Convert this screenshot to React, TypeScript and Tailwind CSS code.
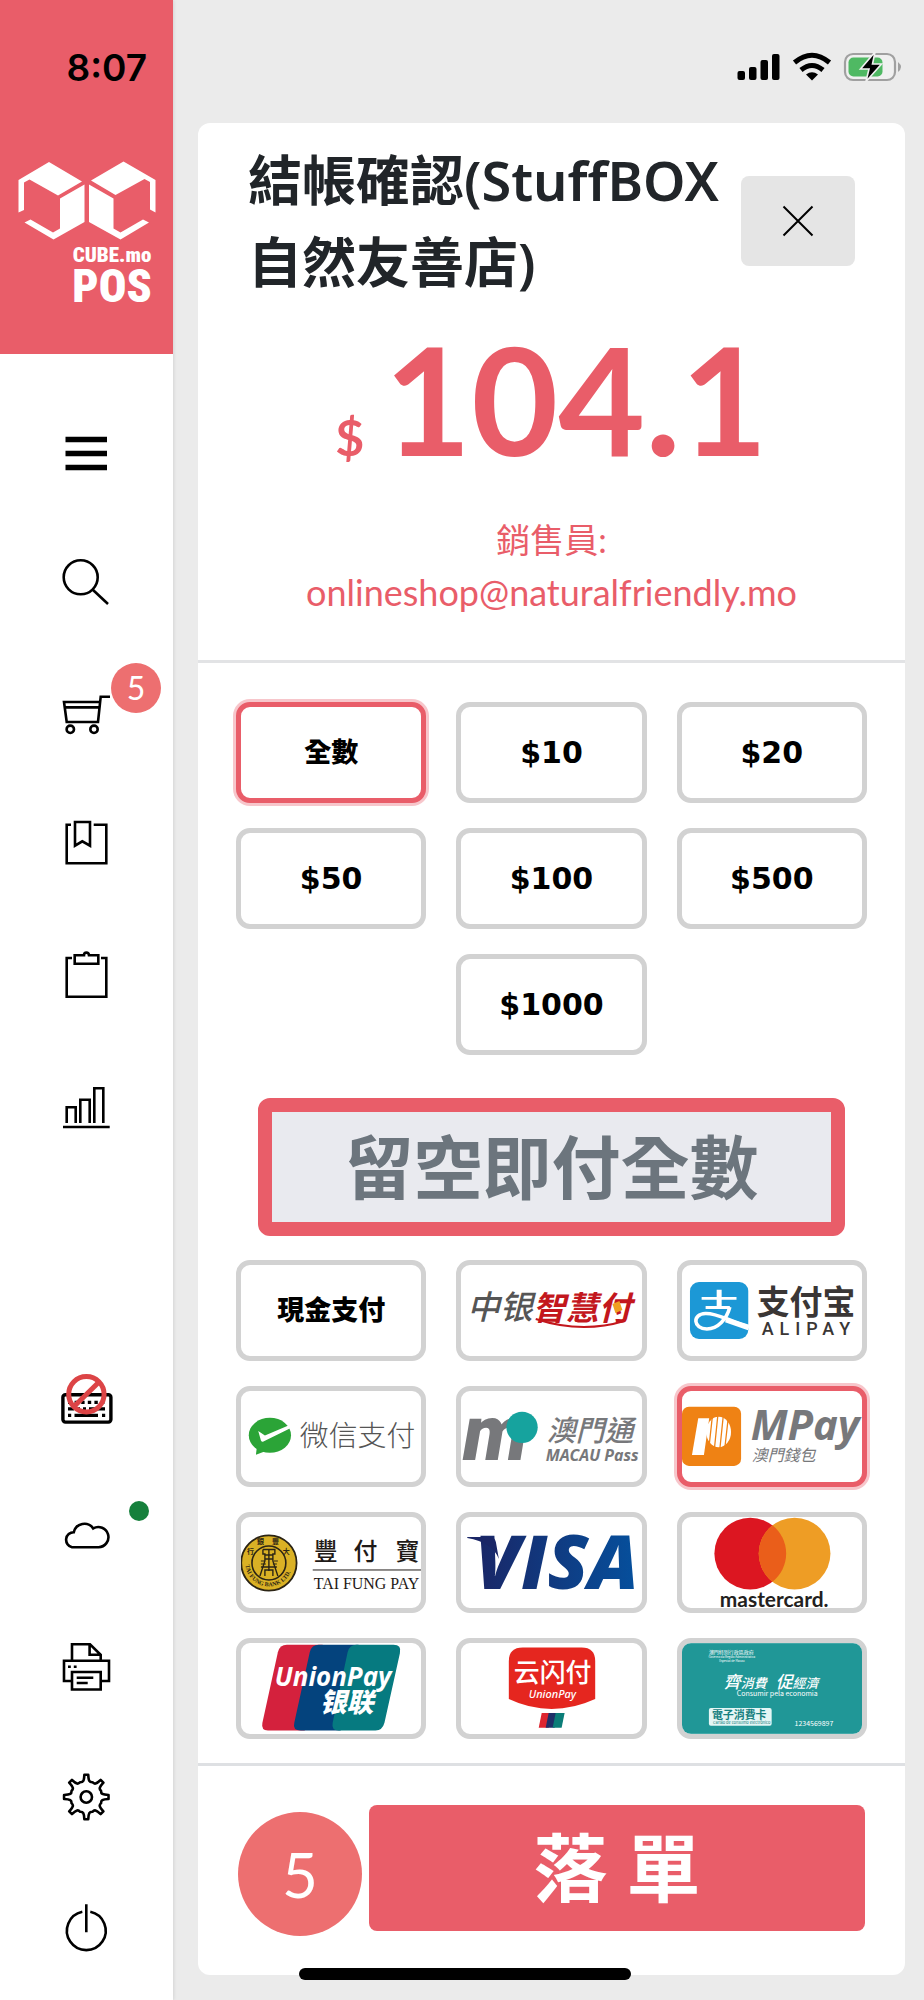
import { useState } from "react"
import type { ReactNode } from "react"
import clsx from "clsx"

interface NavItem {
  id: string
  label: string
  icon: ReactNode
  badge?: ReactNode
}

interface PaymentMethod {
  id: string
  label: string
  logo?: ReactNode
}

function NavIcon({ children }: { children: ReactNode }) {
  return (
    <svg
      viewBox="0 0 48 48"
      className="h-12 w-12 overflow-visible"
      fill="none"
      stroke="#000"
      strokeWidth="2.6"
      aria-hidden="true"
    >
      {children}
    </svg>
  )
}

function buildGearPath(cx: number, cy: number) {
  const point = (deg: number, r: number) => {
    const a = (deg * Math.PI) / 180
    return `${(cx + r * Math.cos(a)).toFixed(2)} ${(cy + r * Math.sin(a)).toFixed(2)}`
  }
  let d = `M${point(-5, 22.3)}`
  for (let i = 0; i < 8; i++) {
    const a = i * 45
    d += `L${point(a + 5, 22.3)}C${point(a + 8, 16)} ${point(a + 12, 15)} ${point(a + 22.5, 16)}`
    d += `C${point(a + 33, 15)} ${point(a + 37, 16)} ${point(a + 40, 22.3)}`
  }
  return `${d}Z`
}

const GEAR_PATH = buildGearPath(24.3, 23)

const TOP_NAV: NavItem[] = [
  {
    id: "menu",
    label: "Menu",
    icon: (
      <NavIcon>
        <path d="M3.5 9.5H45M3.5 23.5H45M3.5 37.5H45" strokeWidth="5.4" />
      </NavIcon>
    ),
  },
  {
    id: "search",
    label: "Search",
    icon: (
      <NavIcon>
        <circle cx="18.7" cy="17.3" r="17" />
        <path d="M30.5 29.5 46 44" />
      </NavIcon>
    ),
  },
  {
    id: "cart",
    label: "Cart",
    badge: (
      <span className="absolute top-[14px] right-3 flex h-[50px] w-[50px] items-center justify-center rounded-full bg-[#ed6f70] text-[32px] font-normal text-white">
        5
      </span>
    ),
    icon: (
      <NavIcon>
        <path d="M48 6.7H38.7L36 32H4.7L2 12H38M3 17.4H37.5" />
        <circle cx="8.3" cy="39.3" r="3.7" />
        <circle cx="32" cy="39.3" r="3.7" />
      </NavIcon>
    ),
  },
  {
    id: "bookmark",
    label: "Bookmarks",
    icon: (
      <NavIcon>
        <path d="M9 4.7H4.7V43.3H44.3V4.7H31.7" />
        <path d="M13 2H28V25.7L20.3 21.3 13 25.7Z" />
      </NavIcon>
    ),
  },
  {
    id: "clipboard",
    label: "Orders",
    icon: (
      <NavIcon>
        <path d="M10 8H4.7V46.7H44.3V8H39" />
        <path d="M12.7 5.3H22Q22 2.6 24.4 2.6T27 5.3H36.3V13.7H12.7Z" />
      </NavIcon>
    ),
  },
  {
    id: "chart",
    label: "Reports",
    icon: (
      <NavIcon>
        <path d="M1 47H47.7M4.7 43V27.3H13.7V43M18.3 43V19.7H27.7V43M32.3 43V8.2H41.3V43" />
      </NavIcon>
    ),
  },
]

const BOTTOM_NAV: NavItem[] = [
  {
    id: "keyboard",
    label: "Keyboard off",
    icon: (
      <NavIcon>
        <rect x="0.9" y="10.7" width="48" height="27.4" rx="2.5" strokeWidth="3.4" />
        <path d="M6 18.4H44" strokeWidth="3.4" strokeDasharray="3.4 3.2" />
        <path d="M6 24.8H43" strokeWidth="3.2" strokeDasharray="6 3 3 3 3 3 16" />
        <path d="M6 31.4H9.2M12.5 31.4H36M40 31.4H43.2" strokeWidth="3.2" />
        <circle cx="24.4" cy="10.3" r="17.7" stroke="#dc4446" strokeWidth="5" />
        <path d="M12 22.5 37-2" stroke="#dc4446" strokeWidth="5" />
      </NavIcon>
    ),
  },
  {
    id: "cloud",
    label: "Cloud sync",
    badge: <span className="absolute top-7 right-6 h-5 w-5 rounded-full bg-[#16803c]" />,
    icon: (
      <NavIcon>
        <path d="M10 33.2A7.6 7.6 0 0 1 11.8 18.2A10.8 10.8 0 0 1 31.2 14.4A10.1 10.1 0 1 1 36.5 33.2Z" />
      </NavIcon>
    ),
  },
  {
    id: "printer",
    label: "Printer",
    icon: (
      <NavIcon>
        <path d="M10 37H2V16.7H47V37H38.7" />
        <path d="M10 28H38.7V45.5H10ZM10 16.7V0.3H28L38.7 10.8V16.7M27.6 0.3V10.8H38.7" />
        <path d="M14.7 33.7H31.3M14.7 39H25.7M6 22.7H8.8M11.8 22.7H14.6" />
      </NavIcon>
    ),
  },
  {
    id: "settings",
    label: "Settings",
    icon: (
      <NavIcon>
        <path d={GEAR_PATH} strokeLinejoin="round" />
        <circle cx="24.3" cy="23" r="5.7" />
      </NavIcon>
    ),
  },
  {
    id: "power",
    label: "Power",
    icon: (
      <NavIcon>
        <path d="M20.3 7.7A19.4 19.4 0 1 0 28.3 7.7M24.3 0.3V28.3" />
      </NavIcon>
    ),
  },
]

const SANS = "Lato, 'Noto Sans CJK TC', sans-serif"
const HAN = "'Noto Sans CJK TC', sans-serif"
const HAN_SC = "'Noto Sans CJK SC', sans-serif"

function Logo({ children }: { children: ReactNode }) {
  return (
    <svg viewBox="0 0 181 91" className="block h-full w-full font-normal" aria-hidden="true">
      {children}
    </svg>
  )
}

const BocLogo = (
  <Logo>
    <g fontFamily={HAN_SC} fontStyle="italic" fontWeight="500">
      <text x="6" y="54" fontSize="33" fill="#555">中银</text>
      <text x="72" y="55" fontSize="33" fontWeight="700" fill="#c3171d">智慧付</text>
    </g>
    <path d="M75 54Q121 69 164 56L170 35" fill="none" stroke="#c3171d" strokeWidth="2" />
    <path d="M152 39 159 36 162 45 155 48Z" fill="#f0a020" />
  </Logo>
)

const AlipayLogo = (
  <Logo>
    <rect x="8" y="17" width="58.5" height="57" rx="9" fill="#1c98d6" />
    <g fill="none" stroke="#fff">
      <path d="M19.7 33.3H54.7M23.7 42.5H48" strokeWidth="2.8" />
      <path d="M37.3 24.7V42" strokeWidth="5" />
      <path d="M48 42C45 54 36 64 25 64C11 64 10 49 23.5 48.5C36 48 46 56 67 61.5" strokeWidth="3.6" />
      <path d="M44 55 67 63" strokeWidth="5" />
    </g>
    <text x="75" y="49" fontSize="33" fontWeight="700" fill="#3a3635" fontFamily={HAN_SC}>支付宝</text>
    <text x="80" y="70" fontSize="18" fontWeight="500" fill="#3a3635" fontFamily="Roboto, sans-serif" className="tracking-[6px]">ALIPAY</text>
  </Logo>
)

const WechatLogo = (
  <Logo>
    <ellipse cx="29" cy="44.3" rx="21.2" ry="17.6" fill="#2ba437" />
    <path d="M16 55 15 63.7 25 60Z" fill="#2ba437" />
    <path d="M17.3 40 24 44.4 47.6 34.5 50 37 22.5 50.5Q21 51.3 20 49.5Z" fill="#fff" />
    <text x="59" y="55" fontSize="29" fontWeight="300" fill="#555" fontFamily={HAN_SC}>微信支付</text>
  </Logo>
)

const MacauPassLogo = (
  <Logo>
    <text x="2" y="69" fontSize="78" fontWeight="900" fontStyle="italic" fill="#77787b" fontFamily="Roboto, sans-serif">m</text>
    <circle cx="61.3" cy="36.3" r="15.7" fill="#16a39e" />
    <text x="86" y="50" fontSize="29" fontWeight="500" fontStyle="italic" fill="#77787b" fontFamily={HAN}>澳門通</text>
    <text x="85" y="70" fontSize="16" fontWeight="700" fontStyle="italic" fill="#77787b" fontFamily="'Noto Sans', sans-serif">MACAU Pass</text>
  </Logo>
)

const MPayLogo = (
  <Logo>
    <rect x="0" y="15.7" width="59.3" height="59.3" rx="7" fill="#ef8214" />
    <path d="M16.3 27.3H27.3L22 64H10Z" fill="#fff" />
    <ellipse cx="36.8" cy="41" rx="12.4" ry="15.3" fill="#fff" />
    <path d="M30.5 25 27 57M36 24 32.5 58M41.5 24 38 58M46.5 26 43 57" stroke="#ef8214" strokeWidth="1.3" />
    <text x="69" y="49" fontSize="42" fontWeight="700" fontStyle="italic" fill="#77787b" fontFamily="'Noto Sans', sans-serif">MPay</text>
    <text x="70" y="70" fontSize="16" fontStyle="italic" fill="#77787b" fontFamily={HAN}>澳門錢包</text>
  </Logo>
)

const TaiFungLogo = (
  <Logo>
    <defs>
      <path id="seal-bottom" d="M4.5 46A23.5 23.5 0 0 0 51.5 46" />
    </defs>
    <circle cx="28" cy="46" r="27.8" fill="#dab125" stroke="#2b2415" strokeWidth="1.8" />
    <circle cx="28" cy="46" r="17" fill="none" stroke="#2b2415" strokeWidth="1.6" />
    <path d="M22 32.5H34V37H32V44L37 59M22 32.5V37H24V44L19 59M28 33V54M24 38H32M24 42H32M20 50H36M24 59V53H32V59" fill="none" stroke="#2b2415" strokeWidth="1.4" />
    <path d="M20 44H24M20 47H25M33 44H37M32 47H36" stroke="#2b2415" strokeWidth="1.2" />
    <text fontSize="6" fontWeight="700" fill="#2b2415" fontFamily="'Liberation Serif', serif">
      <textPath href="#seal-bottom" startOffset="2">TAI FUNG BANK LTD.</textPath>
    </text>
    <g fontSize="7" fontWeight="700" fill="#2b2415" fontFamily={HAN}>
      <text x="6" y="37">行</text>
      <text x="16" y="27">銀</text>
      <text x="31" y="27">豐</text>
      <text x="42" y="37">大</text>
    </g>
    <g fontSize="24" fontWeight="500" fill="#1f1a17" fontFamily={HAN}>
      <text x="73" y="43">豐</text>
      <text x="113" y="43">付</text>
      <text x="155" y="43">寶</text>
    </g>
    <path d="M72 53H181" stroke="#1f1a17" strokeWidth="1" />
    <text x="73" y="72" fontSize="16" fill="#1f1a17" fontFamily="'Liberation Serif', serif">TAI FUNG PAY</text>
  </Logo>
)

const VisaLogo = (
  <Logo>
    <defs>
      <linearGradient id="visa-blue" x1="0" x2="1">
        <stop offset="0" stopColor="#1a2666" />
        <stop offset="1" stopColor="#05509d" />
      </linearGradient>
    </defs>
    <text x="14" y="72.5" fontSize="75" fontWeight="800" fontStyle="italic" fill="url(#visa-blue)" fontFamily="'Open Sans', sans-serif">VISA</text>
    <path d="M6.3 19.8H29Q34 19.8 35 25L38 42Q32 25 6.3 20.8Z" fill="#1a2666" />
  </Logo>
)

const MastercardLogo = (
  <Logo>
    <circle cx="68.5" cy="36.5" r="36" fill="#dc1621" />
    <circle cx="113" cy="36.5" r="36" fill="#ee9d25" />
    <path d="M90.8 8.2A36 36 0 0 1 90.8 64.8A36 36 0 0 1 90.8 8.2Z" fill="#ea5e1a" />
    <text x="38" y="90" fontSize="21" fontWeight="700" fill="#231f20" fontFamily="Lato, sans-serif">mastercard.</text>
  </Logo>
)

const UnionPayLogo = (
  <Logo>
    <path d="M46 1.7H82L64 87.7H27Q20 87.7 21.5 80L37 9Q39 1.7 46 1.7Z" fill="#d4213d" />
    <path d="M78 1.7H118L100 87.7H60Q51.5 87.7 53.5 80L69 9Q71 1.7 78 1.7Z" fill="#04437d" />
    <path d="M116 1.7H153Q161.5 1.7 159.5 10L144 80Q142 87.7 135 87.7H98Q90.5 87.7 92 80L107 9Q109 1.7 116 1.7Z" fill="#067a80" />
    <g fill="#fff" fontStyle="italic" fontWeight="700">
      <text x="34" y="43" fontSize="26" fontFamily="'Open Sans', sans-serif">UnionPay</text>
      <text x="79" y="69" fontSize="27" fontWeight="900" fontFamily={HAN_SC}>银联</text>
    </g>
  </Logo>
)

const QuickPassLogo = (
  <Logo>
    <path d="M62 4.3H121Q134.7 4.3 134.7 18V56Q113 66 91 66T48 56V18Q48 4.3 62 4.3Z" fill="#e5261f" />
    <text x="53" y="39" fontSize="26" fontWeight="500" fill="#fff" fontFamily={HAN_SC}>云闪付</text>
    <text x="68" y="55" fontSize="11" fontWeight="500" fontStyle="italic" fill="#fff" fontFamily="'Noto Sans', sans-serif">UnionPay</text>
    <path d="M81 70H91L88 85H78Z" fill="#dd2530" />
    <path d="M88 70H97L94 85H85Z" fill="#1f2f68" />
    <path d="M95 70H104L101 85H92Z" fill="#0b7d78" />
  </Logo>
)

const ConsumerCardLogo = (
  <Logo>
    <rect width="181" height="91" fill="#209797" />
    <g fill="#fff" fontFamily={HAN}>
      <text x="27" y="11" fontSize="5">澳門特別行政區政府</text>
      <g fontSize="3" textAnchor="middle">
        <text x="50" y="15">Governo da Região Administrativa</text>
        <text x="50" y="19">Especial de Macau</text>
      </g>
      <g fontStyle="italic" fontWeight="500" fontSize="13">
        <text x="42" y="45"><tspan fontSize="17">齊</tspan>消費</text>
        <text x="94" y="45"><tspan fontSize="17">促</tspan>經濟</text>
      </g>
      <text x="55" y="53" fontSize="7">Consumir pela economia</text>
      <text x="113" y="83" fontSize="7">1234569897</text>
    </g>
    <rect x="27" y="65" width="63" height="18" rx="2" fill="#e4f6f5" />
    <g fill="#15807f" fontFamily={HAN}>
      <text x="30" y="76" fontSize="11" fontWeight="700">電子消費卡</text>
      <text x="31" y="81" fontSize="4">Cartão de consumo electrónico</text>
    </g>
  </Logo>
)

const AMOUNTS = ["全數", "$10", "$20", "$50", "$100", "$500", "$1000"]

const PAYMENT_METHODS: PaymentMethod[] = [
  { id: "cash", label: "現金支付" },
  { id: "boc", label: "中银智慧付", logo: BocLogo },
  { id: "alipay", label: "支付宝", logo: AlipayLogo },
  { id: "wechat", label: "微信支付", logo: WechatLogo },
  { id: "macau-pass", label: "澳門通", logo: MacauPassLogo },
  { id: "mpay", label: "MPay", logo: MPayLogo },
  { id: "tai-fung", label: "豐付寶", logo: TaiFungLogo },
  { id: "visa", label: "VISA", logo: VisaLogo },
  { id: "mastercard", label: "mastercard", logo: MastercardLogo },
  { id: "unionpay", label: "UnionPay", logo: UnionPayLogo },
  { id: "quickpass", label: "云闪付", logo: QuickPassLogo },
  { id: "consumer-card", label: "電子消費卡", logo: ConsumerCardLogo },
]

interface TileProps {
  isSelected: boolean
  onSelect: () => void
  label?: string
  className?: string
  children: ReactNode
}

function Tile({ isSelected, onSelect, label, className, children }: TileProps) {
  return (
    <button
      type="button"
      onClick={onSelect}
      aria-pressed={isSelected}
      aria-label={label}
      className={clsx(
        "flex h-[101px] items-center justify-center overflow-hidden rounded-[14px] border-[5px] bg-white text-[27px] font-black text-black",
        isSelected ? "border-[#e95d69] shadow-[0_0_0_3px_rgba(233,93,105,0.35)]" : "border-[#d2d2d2]",
        className,
      )}
    >
      {children}
    </button>
  )
}

function NavList({ items }: { items: NavItem[] }) {
  return (
    <ul>
      {items.map((item) => (
        <li key={item.id}>
          <button type="button" aria-label={item.label} className="relative flex h-[130px] w-full items-center justify-center pr-0.5">
            {item.icon}
            {item.badge}
          </button>
        </li>
      ))}
    </ul>
  )
}

function BrandLogo() {
  return (
    <svg viewBox="0 0 138 144" className="h-[144px] w-[138px] overflow-visible" role="img" aria-label="CUBE.mo POS">
      <g fill="#fff">
        <path d="M0.5 19 31 1 64 20.5 40 34.5 11.5 18.5 6 21.5V49L0.5 51.5Z" />
        <path d="M42 37.5 66.5 23.5V61L35.5 78.5 6.5 61.5 12.5 58.5 35 71.5 42 67.5Z" />
        <path d="M137.5 19 105.5 0.5 73 19.5 97.5 34 126.5 18 132 21V48.5L137.5 51.5Z" />
        <path d="M95.5 37.5 71 23.5V61L102.5 78.5 131 61.5 125 58.5 102.5 71.5 95.5 67.5Z" />
      </g>
      <g
        fill="#fff"
        fontFamily="'Liberation Sans Narrow', 'Roboto Condensed', Roboto, sans-serif"
        fontWeight="900"
        textAnchor="middle"
      >
        <text x="94" y="101" fontSize="21">CUBE.mo</text>
        <text x="94" y="141" fontSize="46">POS</text>
      </g>
    </svg>
  )
}

function StatusIcons() {
  return (
    <svg viewBox="0 0 168 30" className="h-[30px] w-[168px]" aria-hidden="true">
      <rect x="0.5" y="19" width="7.5" height="9" rx="2" />
      <rect x="12" y="15" width="7.5" height="13" rx="2" />
      <rect x="23.5" y="8" width="7.5" height="20" rx="2" />
      <rect x="35" y="2" width="7.5" height="26" rx="2" />
      <g fill="none" stroke="#000" strokeWidth="5">
        <path d="M57.5 10.5Q75-4 92.5 10.5" />
        <path d="M64 18Q75 9 86 18" />
      </g>
      <path d="M69 22.5Q75 18 81 22.5L75 28.5Z" />
      <rect x="108" y="2" width="50" height="26" rx="8" fill="#f0f0f0" stroke="#a0a0a0" strokeWidth="2.2" />
      <path d="M161 10Q167 15 161 20Z" fill="#a0a0a0" />
      <rect x="111.5" y="5.5" width="34" height="19" rx="5" fill="#4fb963" />
      <path d="M138 0 123.5 17H132L129 29.5 144.5 12H135.5Z" stroke="#f0f0f0" strokeWidth="1.6" />
    </svg>
  )
}

export default function App() {
  const [amount, setAmount] = useState("全數")
  const [method, setMethod] = useState("mpay")

  return (
    <div className="relative flex min-h-screen bg-[#ebebeb] text-[#212529]" style={{ fontFamily: SANS }}>
      <aside className="z-10 flex w-[173px] shrink-0 flex-col bg-white shadow-[0_0_4px_rgba(0,0,0,0.15)]">
        <div className="flex h-[354px] flex-col items-center bg-[#e95d69] pt-[46px]">
          <time className="self-end pr-[26px] font-[Inter] text-[37px] leading-[44px] font-semibold text-black">8:07</time>
          <div className="mt-[71px]">
            <BrandLogo />
          </div>
        </div>
        <nav className="flex flex-1 flex-col justify-between pt-[35px] pb-[7px]">
          <NavList items={TOP_NAV} />
          <NavList items={BOTTOM_NAV} />
        </nav>
      </aside>

      <main className="flex min-w-0 flex-1 flex-col pr-[19px] pb-6 pl-[25px]">
        <div className="flex h-[123px] justify-end pt-[52px]">
          <StatusIcons />
        </div>

        <section className="rounded-xl bg-white">
          <header className="border-b-[3px] border-[#e2e3e5] pb-[42px]">
            <div className="flex items-center justify-between px-[50px] pt-4">
              <h1 className="font-['Noto_Sans','Noto_Sans_CJK_TC',sans-serif] text-[54px] leading-[82px] font-semibold">
                結帳確認(StuffBOX 自然友善店)
              </h1>
              <button
                type="button"
                aria-label="Close"
                className="flex h-[90px] w-[114px] shrink-0 items-center justify-center rounded-lg bg-[#e5e5e5]"
              >
                <svg viewBox="0 0 32 32" className="h-8 w-8" stroke="#000" strokeWidth="2" aria-hidden="true">
                  <path d="M1.5 1.5 30.5 30.5M30.5 1.5 1.5 30.5" />
                </svg>
              </button>
            </div>
            <p className="mt-5 flex items-baseline justify-center gap-5 font-bold text-[#e95d69]">
              <span className="text-[50px] leading-[60px]">$</span>
              <span className="text-[150px] leading-[150px]">104.1</span>
            </p>
            <p className="mt-[41px] text-center leading-[52px] text-[#e95d69]">
              <span className="block text-[34px]">銷售員:</span>
              <span className="block text-[36px]">onlineshop@naturalfriendly.mo</span>
            </p>
          </header>

          <div className="px-[38px] pt-[39px] pb-6">
            <div className="grid grid-cols-3 gap-x-[30px] gap-y-[25px]">
              {AMOUNTS.map((value, index) => (
                <Tile
                  key={value}
                  isSelected={amount === value}
                  onSelect={() => setAmount(value)}
                  className={clsx(index === AMOUNTS.length - 1 && "col-start-2")}
                >
                  {value.startsWith("$") ? (
                    <span className="font-['DejaVu_Sans'] text-[30px] font-bold">{value}</span>
                  ) : (
                    value
                  )}
                </Tile>
              ))}
            </div>

            <div className="mx-[22px] mt-[43px] mb-6">
              <input
                type="text"
                aria-label="付款金額"
                placeholder="留空即付全數"
                className="block h-[138px] w-full rounded-xl border-[14px] border-[#e95d69] bg-[#e9eaef] text-center text-[69px] font-semibold text-[#6c757d] outline-none placeholder:text-[#6c757d]"
              />
            </div>

            <div className="grid grid-cols-3 gap-x-[30px] gap-y-[25px]">
              {PAYMENT_METHODS.map((item) => (
                <Tile
                  key={item.id}
                  label={item.label}
                  isSelected={method === item.id}
                  onSelect={() => setMethod(item.id)}
                >
                  {item.logo ?? item.label}
                </Tile>
              ))}
            </div>
          </div>

          <footer className="flex items-start gap-[7px] border-t-[3px] border-[#dee0e3] px-10 pt-[39px] pb-[39px]">
            <span className="mt-[7px] flex h-[124px] w-[124px] shrink-0 items-center justify-center rounded-full bg-[#ed6f70] text-[62px] leading-[62px] text-white">
              5
            </span>
            <button
              type="button"
              className="h-[126px] flex-1 rounded-lg bg-[#e95d69] font-['Noto_Sans','Noto_Sans_CJK_TC',sans-serif] text-[74px] leading-[100px] font-bold text-white"
            >
              落 單
            </button>
          </footer>
        </section>
      </main>

      <div className="absolute bottom-5 left-[299px] z-20 h-3 w-[332px] rounded-full bg-black" />
    </div>
  )
}
